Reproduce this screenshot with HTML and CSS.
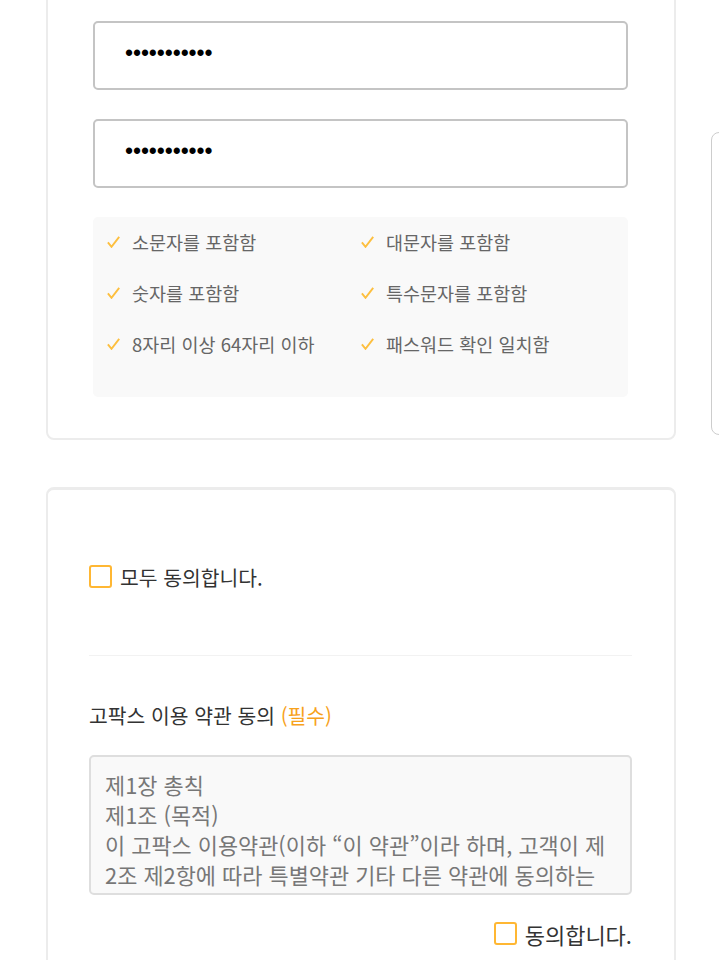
FILE: index.html
```html
<!DOCTYPE html>
<html lang="ko">
<head>
<meta charset="utf-8">
<title>회원가입</title>
<link rel="stylesheet" href="styles.css">
</head>
<body>
<div class="page">
  <main class="col">
    <section class="card card-pw">
      <input class="pw" type="password" value="abcdefghijk" readonly>
      <input class="pw" type="password" value="abcdefghijk" readonly>
      <ul class="rules">
        <li><svg class="chk" viewBox="0 0 13 12" width="13" height="12"><polyline points="0.9,6.4 4.5,10.8 12.2,0.9" fill="none" stroke="#fdbf3f" stroke-width="1.9"/></svg>소문자를 포함함</li>
        <li><svg class="chk" viewBox="0 0 13 12" width="13" height="12"><polyline points="0.9,6.4 4.5,10.8 12.2,0.9" fill="none" stroke="#fdbf3f" stroke-width="1.9"/></svg>대문자를 포함함</li>
        <li><svg class="chk" viewBox="0 0 13 12" width="13" height="12"><polyline points="0.9,6.4 4.5,10.8 12.2,0.9" fill="none" stroke="#fdbf3f" stroke-width="1.9"/></svg>숫자를 포함함</li>
        <li><svg class="chk" viewBox="0 0 13 12" width="13" height="12"><polyline points="0.9,6.4 4.5,10.8 12.2,0.9" fill="none" stroke="#fdbf3f" stroke-width="1.9"/></svg>특수문자를 포함함</li>
        <li><svg class="chk" viewBox="0 0 13 12" width="13" height="12"><polyline points="0.9,6.4 4.5,10.8 12.2,0.9" fill="none" stroke="#fdbf3f" stroke-width="1.9"/></svg>8자리 이상 64자리 이하</li>
        <li><svg class="chk" viewBox="0 0 13 12" width="13" height="12"><polyline points="0.9,6.4 4.5,10.8 12.2,0.9" fill="none" stroke="#fdbf3f" stroke-width="1.9"/></svg>패스워드 확인 일치함</li>
      </ul>
    </section>
    <section class="card card-terms">
      <label class="agree agree-all"><span class="box"></span>모두 동의합니다.</label>
      <hr class="divider">
      <h3 class="terms-title">고팍스 이용 약관 동의 <span class="req">(필수)</span></h3>
      <div class="terms-text">제1장 총칙<br>제1조 (목적)<br>이 고팍스 이용약관(이하 “이 약관”이라 하며, 고객이 제<br>2조 제2항에 따라 특별약관 기타 다른 약관에 동의하는<br>경우 그 특별약관 등을 포함합니다)은 주식회사 스트리미</div>
      <label class="agree agree-one"><span class="box"></span>동의합니다.</label>
    </section>
  </main>
  <aside class="peek"></aside>
</div>
</body>
</html>
```

FILE: styles.css
```css
html, body {
  margin: 0;
  padding: 0;
  background: #fff;
  height: 960px;
  overflow: hidden;
}
body {
  font-family: "Noto Sans CJK KR", "Noto Sans", sans-serif;
}
.page {
  display: flex;
  align-items: flex-start;
  padding-left: 46px;
  gap: 35px;
}
.col {
  width: 630px;
  flex: none;
  display: flex;
  flex-direction: column;
  gap: 47px;
  margin-top: -30px;
}
.card {
  box-sizing: border-box;
  border: 2px solid #ececec;
  border-radius: 8px;
  background: #fff;
}
.card-pw {
  padding: 49px 46px 41px 45px;
  display: flex;
  flex-direction: column;
  gap: 29px;
}
.pw {
  display: block;
  box-sizing: border-box;
  width: 100%;
  height: 69px;
  margin: 0;
  border: 2px solid #c4c4c4;
  border-radius: 5px;
  padding: 0 0 4px 30px;
  background: #fff;
  color: #000;
  font-family: "Liberation Sans", sans-serif;
  font-size: 23px;
  letter-spacing: -0.1px;
  outline: none;
}
.rules {
  list-style: none;
  margin: 0;
  padding: 12px 13px 40px 14px;
  background: #f9f9f9;
  border-radius: 5px;
  display: grid;
  grid-template-columns: 254px 254px;
  row-gap: 25px;
}
.rules li {
  display: flex;
  align-items: center;
  gap: 12px;
  height: 26px;
  font-size: 18.5px;
  color: #666;
}
.chk {
  flex: none;
}
.card-terms {
  border-top-width: 3px;
  padding: 75px 42px 60px 41px;
  display: flex;
  flex-direction: column;
}
.agree {
  display: flex;
  align-items: center;
  gap: 8px;
  height: 23px;
  color: #333;
}
.agree-all {
  font-size: 20.4px;
}
.box {
  width: 23px;
  height: 23px;
  box-sizing: border-box;
  border: 2px solid #ffb733;
  border-radius: 3px;
  flex: none;
}
.divider {
  margin: 67px 0 0;
  border: 0;
  border-top: 1px solid #f2f2f2;
  height: 0;
}
.terms-title {
  margin: 46px 0 0;
  font-size: 20.4px;
  font-weight: 400;
  line-height: 26px;
  color: #333;
}
.req {
  color: #f7a21b;
}
.terms-text {
  margin-top: 27px;
  box-sizing: border-box;
  height: 140px;
  border: 2px solid #dedede;
  border-radius: 5px;
  background: #f9f9f9;
  padding: 13px 14px;
  font-size: 21.9px;
  line-height: 30px;
  color: #777;
  white-space: nowrap;
  overflow: hidden;
}
.agree-one {
  margin-top: 27px;
  justify-content: flex-end;
  font-size: 22px;
}
.peek {
  flex: none;
  margin-top: 132px;
  width: 60px;
  height: 303px;
  box-sizing: border-box;
  border: 1px solid #cdcdcd;
  border-radius: 8px;
}
```
